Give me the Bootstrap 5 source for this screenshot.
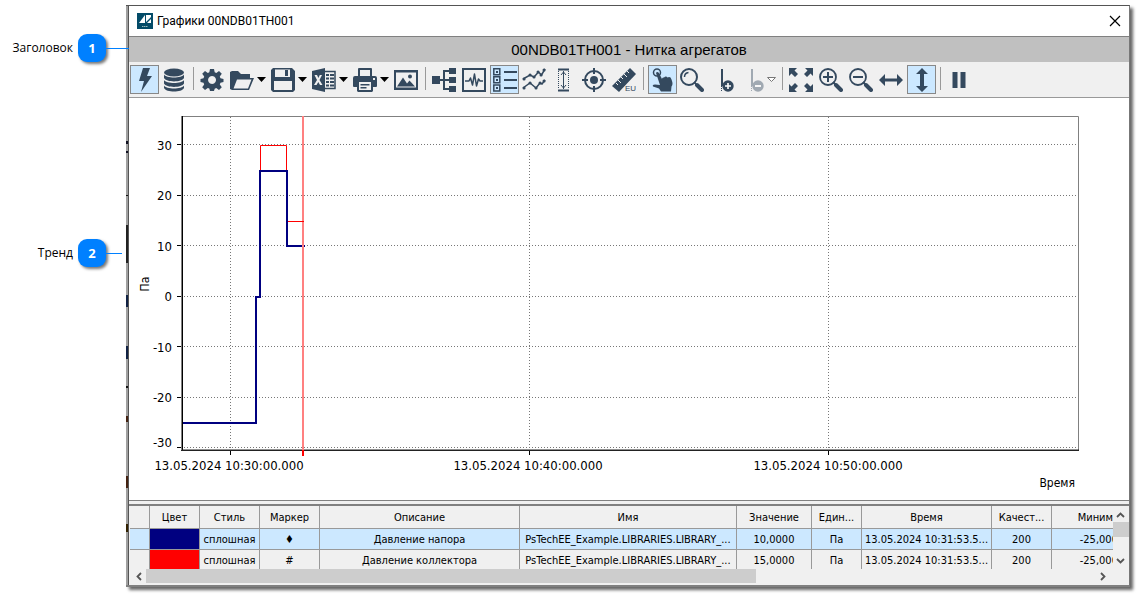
<!DOCTYPE html>
<html lang="ru">
<head>
<meta charset="utf-8">
<meta name="viewport" content="width=device-width, initial-scale=1">
<title>Графики 00NDB01TH001</title>
<link href="https://cdn.jsdelivr.net/npm/bootstrap@5.3.0/dist/css/bootstrap.min.css" rel="stylesheet">
<script src="https://cdn.jsdelivr.net/npm/bootstrap@5.3.0/dist/js/bootstrap.bundle.min.js"></script>
<style>
:root{--ink:#34495e;--panel:#f0f0f0;--pick:#cce8ff;--ui:"DejaVu Sans Condensed","Noto Sans",sans-serif}
body{background:#fff;color:#000;font-family:var(--ui);font-size:11px;line-height:16px}
.page{padding:5px 9px 8px 0}
.callouts{width:126px;flex:none;z-index:1;padding-top:29px}
.callout{height:28px;margin-bottom:177px;font:13px/28px "Open Sans",sans-serif}
.callout .label{font-size:12px;margin-right:5px}
.pin{width:28px;height:28px;border-radius:9px;background:#0080ff;color:#fff;font-weight:700;text-align:center;box-shadow:2px 2px 3px #0008}
.lead-line{height:1px;width:16px;background:#0080ff}
.lead-line.long{width:23px;margin-right:-3px}
.win{min-width:0;border-top:1px solid #555;border-right:1px solid #777;border-bottom:2px solid #808080;box-shadow:3px 3px 3px #0009}
.edge{width:3px;flex:none;border-right:1px solid #555;background:
 linear-gradient(#0000 135px,#112 135px 138px,#0000 138px 145px,#112 145px 147px,#0000 147px 189px,#111 189px 190px,#0000 190px 219px,#222 219px 257px,#0000 257px 289px,#124 289px 301px,#0000 301px 340px,#124 340px 353px,#0000 353px 380px,#111 380px 382px,#0000 382px 410px,#421 410px 416px,#0000 416px 470px,#421 470px 482px,#0000 482px 518px,#320 518px 526px,#0000 526px),#a0a0a0}
.pane{min-width:0}
.titlebar{height:30px;padding:0 8px;font:12px/30px Roboto,sans-serif}
.closer{border:0;background:none;padding:0;line-height:0}
.heading{height:26px;border-top:1px solid #808080;background:silver;font:15px/26px "Liberation Sans",sans-serif;margin:0}
.tools{height:36px;padding-top:3px;background:var(--panel);border-bottom:1px solid #999}
.tool{width:30px;height:29px;padding:0;border:0;background:none;color:var(--ink);flex:none}
.tool svg{width:24px;height:24px;fill:currentColor;display:block}
.tool .ln{fill:none;stroke:currentColor}
.tool.picked{width:29px;margin-left:1px;background:var(--pick);outline:1px solid #888;outline-offset:-1px}
.tool.drop{width:41px;padding-left:3px}
.tool.drop .arrow{width:11px;height:6px;margin-left:2px;color:#000}
.divider{width:8px;padding:2px 4px 4px 4px;flex:none}
.divider::before{content:"";display:block;width:1px;height:23px;background:#999}
.chart{display:block;width:100%;height:auto;font:12px var(--ui)}
.chart .ticks{font-size:13px}
.split{height:6px;border-top:1px solid #808080;border-bottom:2px solid #808080;background:var(--panel)}
.gridbox{background:var(--panel);height:63px;overflow:hidden}
.gridview{min-width:0;padding-left:1px;overflow:hidden}
.signals{table-layout:fixed;width:1023px;border-collapse:separate;border-spacing:0}
.signals th,.signals td{height:21px;padding:2px 0 0;line-height:18px;font-weight:400;text-align:center;border-right:1px solid #999;border-bottom:1px solid #999;white-space:nowrap;overflow:hidden}
.signals th{height:23px}
.signals .chosen td{background:var(--pick)}
.signals .navy{background:navy!important}
.signals .red{background:red}
.vbar{width:16px;flex:none;background:var(--panel)}
.vbar .thumb{height:15px;background:#cdcdcd}
.hbar{height:16px;background:var(--panel)}
.hbar .thumb{height:14px;width:61%;background:#cdcdcd}
</style>
</head>
<body>
<main class="page d-flex">
 <aside class="callouts">
  <div class="callout d-flex align-items-center justify-content-end"><span class="label">Заголовок</span><span class="pin">1</span><span class="lead-line long"></span></div>
  <div class="callout d-flex align-items-center justify-content-end"><span class="label">Тренд</span><span class="pin">2</span><span class="lead-line me-1"></span></div>
 </aside>
 <section class="win d-flex flex-grow-1">
  <div class="edge"></div>
  <div class="pane flex-grow-1">
   <div class="titlebar d-flex align-items-center">
    <svg width="16" height="16" class="me-1" aria-hidden="true"><path fill="#034b68" d="M0 0h16v16H0z"/><path fill="#fff" d="M2 10 8 2v8zM9 2h5v2L9 9zM10 10l4-4v4z"/><path stroke="#9bb" d="M5 13.500h6" stroke-dasharray="1.500 .5"/></svg>
    <span class="flex-grow-1">Графики 00NDB01TH001</span>
    <button class="closer" aria-label="Закрыть"><svg width="12" height="12"><path d="m1 1 10 10M11 1 1 11" stroke="#000" stroke-width="1.200"/></svg></button>
   </div>
   <h1 class="heading text-center">00NDB01TH001 - Нитка агрегатов</h1>
   <div class="tools d-flex" role="toolbar" aria-label="Инструменты">
    <button class="tool picked d-flex align-items-center justify-content-center" aria-label="Онлайн"><svg><path d="M10 0h7l-3 8h5L8 24l3-11H6z"/></svg></button>
    <button class="tool d-flex align-items-center justify-content-center" aria-label="Архив"><svg><ellipse cx="12" cy="4.500" rx="10" ry="4"/><path d="M2 6.500c2 4 18 4 20 0v3.500c-2 4.500-18 4.500-20 0zM2 12c2 4 18 4 20 0v3.500c-2 4.500-18 4.500-20 0zM2 17.500c2 4 18 4 20 0V20c-2 4.700-18 4.700-20 0z"/></svg></button>
    <span class="divider"></span>
    <button class="tool d-flex align-items-center justify-content-center" aria-label="Настройки"><svg><path fill-rule="evenodd" d="m10 1h4l.7 3.300 1.600.7L19 3l2.800 2.800-2 2.800.7 1.600 3 .8v3l-3 .8-.7 1.600 2 2.800L19 22l-2.800-2-1.500.7L14 23h-4l-.7-2.500-1.500-.6L5 22l-2.800-2.800 2-2.800-.7-1.600-3-.8v-3l3-.8.7-1.600-2-2.800L5 3l2.800 2 1.500-.7zM12 8a4 4 0 1 0 .1 0z"/></svg></button>
    <button class="tool drop d-flex align-items-center" aria-label="Открыть"><svg><path fill-rule="evenodd" d="M0 21V4l2-1h6l3 3h9v4h4l-5 12H2zM7 11.500 3.500 20.500H18l3.500-9z"/></svg><svg class="arrow"><path d="M1 0h9L5.500 5z"/></svg></button>
    <button class="tool drop d-flex align-items-center" aria-label="Сохранить"><svg><path fill-rule="evenodd" d="M2 0h19l3 3v19l-2 2H2l-2-2V2zM4 1.500V9h15V1.500zM3 13v9h18v-9z"/><path d="M14 2h3v6h-3z"/></svg><svg class="arrow"><path d="M1 0h9L5.500 5z"/></svg></button>
    <button class="tool drop d-flex align-items-center" aria-label="Экспорт в Excel"><svg><path fill-rule="evenodd" d="m0 3 13-3v24L0 21zM2.500 7 5 12l-3 5h2.500L6.300 14 8 17h2.500l-3-5L10 7H7.800L6.400 10 5 7z"/><path class="ln" stroke-width="1.500" d="M13 3.500h10v17H13"/><path class="ln" stroke-width="2" d="M14 7h3m1 0h4m-8 3.500h3m1 0h4M14 14h3m1 0h4m-8 3.500h3m1 0h4"/></svg><svg class="arrow"><path d="M1 0h9L5.500 5z"/></svg></button>
    <button class="tool drop d-flex align-items-center" aria-label="Печать"><svg><path fill-rule="evenodd" d="M5 8V1q0-1 1-1h12q1 0 1 1v7h3q2 0 2 2v8q0 1-1 1h-3v4l-1 1H5l-1-1v-4H1q-1 0-1-1v-8q0-2 2-2zM7 2v6h10V2zM6 14v8h12v-8zM20 10v2h2v-2z"/><path d="M7.500 16h9v1.500h-9zM7.500 19h6v1.500h-6z"/></svg><svg class="arrow"><path d="M1 0h9L5.500 5z"/></svg></button>
    <button class="tool d-flex align-items-center justify-content-center" aria-label="Изображение"><svg><path fill-rule="evenodd" d="M0 2h24v20H0zM2 4.500v15h20v-15z"/><path d="m3 18.500 6-9 4 6 2.500-3 5.500 6z"/><circle cx="16" cy="8.500" r="2"/></svg></button>
    <span class="divider"></span>
    <button class="tool d-flex align-items-center justify-content-center" aria-label="Дерево"><svg><path d="M0 8h8v8H0zM17 0h7v6h-7zM17 9h7v6h-7zM17 18h7v6h-7z"/><path class="ln" stroke-width="2" d="M7 12h11M18 3h-6v18h6"/></svg></button>
    <button class="tool d-flex align-items-center justify-content-center" aria-label="Сигнал"><svg><path class="ln" stroke-width="2" d="M1 1h22v22H1z"/><path class="ln" stroke-width="1.500" stroke-linejoin="round" d="M3 13h4l1.500-3 2 7 2-11 2 12 2-7 1.500 2h3"/></svg></button>
    <button class="tool picked d-flex align-items-center justify-content-center" aria-label="Легенда"><svg><path class="ln" stroke-width="1.500" d="M.8.8h6v6h-6zM.8 8.800h6v6h-6zM.8 17h6v6h-6z"/><path class="ln" stroke-width="2" d="M11 4h13M11 12h13M11 20h13M3 4h2m-2 8h2m-2 8h2"/></svg></button>
    <button class="tool d-flex align-items-center justify-content-center" aria-label="Тренды"><svg><path class="ln" stroke-width="1.500" d="m1 11 7-4 4 2 4.500-5 3 3L23 1M1 20l7-5 6 5 4-5 2 1 3-4"/><path class="ln" stroke-linecap="round" stroke-width="3" d="M2 11h.1M8 7h.1M12 9h.1M16 4h.1M19 7h.1M22 2h.1M2 20h.1M8 15h.1M14 20h.1M18 15h.1M22 13h.1"/></svg></button>
    <button class="tool d-flex align-items-center justify-content-center" aria-label="Масштаб по высоте"><svg><path class="ln" stroke-width="2" d="M6 1.500h11M6 22.500h11"/><path class="ln" d="M11.500 3v18M9 7l2.500-3L14 7m-5 10 2.500 3 2.500-3"/><path class="ln" stroke-dasharray="1 1" d="M6.500 3v18m10-18v18"/></svg></button>
    <button class="tool d-flex align-items-center justify-content-center" aria-label="Центрировать"><svg><circle class="ln" cx="12" cy="12" r="9" stroke-width="2"/><circle cx="12" cy="12" r="4"/><path class="ln" stroke-width="2" d="M12 0v6m0 12v6M0 12h6m12 0h6"/></svg></button>
    <button class="tool d-flex align-items-center justify-content-center" aria-label="Единицы измерения"><svg><path d="m0 18 18-18 6 6L7 24z"/><path stroke="#f0f0f0" d="m4 15 2 2m0-5 3 3m0-6 2 2m1-5 3 3m0-6 2 2"/><text x="13" y="23" font-size="8" font-family="Liberation Sans, sans-serif">EU</text></svg></button>
    <span class="divider"></span>
    <button class="tool picked d-flex align-items-center justify-content-center" aria-label="Указатель"><svg><circle class="ln" cx="6" cy="4.500" r="3.500" stroke-width="1.500"/><path d="M5 5q1-2 3 0l3 6q0-2 2-1.500 2-2 3.500 0 3-1.500 4 2 2 5 0 7l-.5 5H10l-2-3-6-2q-1-2 2-2l5 .5z"/></svg></button>
    <button class="tool d-flex align-items-center justify-content-center" aria-label="Лупа"><svg><circle class="ln" cx="9" cy="9" r="8" stroke-width="2"/><path class="ln" stroke-width="4" stroke-linecap="round" d="m17 17 5 5"/><path class="ln" stroke-width="1.500" d="m14 14 3 3M4.500 9q0-4 4-4.500"/></svg></button>
    <button class="tool d-flex align-items-center justify-content-center" aria-label="Добавить курсор"><svg><path class="ln" stroke-width="2" d="M12 1v17"/><path class="ln" stroke-dasharray="1 1" d="M11.500 18v5"/><circle cx="18" cy="18" r="5.700"/><path stroke="#fff" stroke-width="1.600" d="M15 18h6m-3-3v6"/></svg></button>
    <button class="tool drop d-flex align-items-center" aria-label="Удалить курсор"><svg opacity=".42"><path class="ln" stroke-width="2" d="M12 1v17"/><path class="ln" stroke-dasharray="1 1" d="M11.500 18v5"/><circle cx="18" cy="18" r="5.700"/><path stroke="#fff" stroke-width="2" d="M15 18h6"/></svg><svg class="arrow"><path d="M1.500.5h8l-4 4z" fill="#fff" stroke="#777"/></svg></button>
    <span class="divider"></span>
    <button class="tool d-flex align-items-center justify-content-center" aria-label="Показать всё"><svg><path d="M0 0h8L5.500 2.500 9 6 6 9 2.500 5.500 0 8zM24 0h-8l2.500 2.500L15 6l3 3 3.500-3.500L24 8zM0 24h8l-2.500-2.500L9 18l-3-3-3.500 3.500L0 16zM24 24h-8l2.500-2.500L15 18l3-3 3.500 3.500L24 16z"/></svg></button>
    <button class="tool d-flex align-items-center justify-content-center" aria-label="Увеличить"><svg><circle class="ln" cx="9" cy="9" r="8" stroke-width="1.800"/><path class="ln" stroke-width="2" d="M4 9h10M9 4v10m5 0 3 3"/><path class="ln" stroke-width="4" stroke-linecap="round" d="m17 17 5 5"/></svg></button>
    <button class="tool d-flex align-items-center justify-content-center" aria-label="Уменьшить"><svg><circle class="ln" cx="9" cy="9" r="8" stroke-width="1.800"/><path class="ln" stroke-width="2" d="M4 9h10m0 5 3 3"/><path class="ln" stroke-width="4" stroke-linecap="round" d="m17 17 5 5"/></svg></button>
    <button class="tool d-flex align-items-center justify-content-center" aria-label="По горизонтали"><svg><path d="m0 12 6-6v4.500h12V6l6 6-6 6v-4.500H6V18z"/></svg></button>
    <button class="tool picked d-flex align-items-center justify-content-center" aria-label="По вертикали"><svg><path d="m12 0 6 6h-4v12h4l-6 6-6-6h4V6H6z"/></svg></button>
    <span class="divider"></span>
    <button class="tool d-flex align-items-center justify-content-center" aria-label="Пауза"><svg><path d="M5.500 4h5v16h-5zM13.500 4h5v16h-5z"/></svg></button>
   </div>
   <svg class="chart" viewBox="129 98 1000 402" role="img" aria-label="Тренд">
    <path fill="none" stroke="#808080" d="M182 116.500h896.500V450"/>
    <path fill="none" stroke="#777" stroke-dasharray="1 2" d="M184 144.500h894M184 195.500h894M184 245.500h894M184 296.500h894M184 346.500h894M184 397.500h894M184 447.500h894M230.500 117v333M529.500 117v333M828.500 117v333"/>
    <path fill="none" stroke="#000" d="M182.500 116v335M177 144.500h5M177 195.500h5M177 245.500h5M177 296.500h5M177 346.500h5M177 397.500h5M177 447.500h5M230.500 450v5M529.500 450v5M828.500 450v5"/>
    <path stroke="#222" stroke-width="1.500" d="M181 450.300h898"/>
    <path stroke="#808080" d="M181.500 116v334"/>
    <path fill="none" stroke="red" d="M260.500 171v-25.500h26V171"/>
    <path fill="none" stroke="navy" stroke-width="2" d="M183 423h73V297h4V171h27v75h18"/>
    <path stroke="#ff8080" stroke-width="2" d="M303 116v334"/>
    <path stroke="red" stroke-width="2" d="M303 450v6"/>
    <path stroke="red" d="M288 221.500h16"/>
    <g class="ticks" text-anchor="end"><text x="172" y="150">30</text><text x="172" y="200">20</text><text x="172" y="251">10</text><text x="172" y="301">0</text><text x="172" y="352">-10</text><text x="172" y="402">-20</text><text x="172" y="447">-30</text></g>
    <g class="ticks" text-anchor="middle"><text x="229" y="470">13.05.2024 10:30:00.000</text><text x="528" y="470">13.05.2024 10:40:00.000</text><text x="828" y="470">13.05.2024 10:50:00.000</text></g>
    <text x="1075" y="487" text-anchor="end">Время</text>
    <text transform="translate(149 284)rotate(-90)" text-anchor="middle">Па</text>
   </svg>
   <div class="split"></div>
   <div class="gridbox d-flex">
    <div class="gridview flex-grow-1">
     <table class="signals">
      <colgroup><col style="width:20px"><col style="width:50px"><col style="width:60px"><col style="width:60px"><col style="width:200px"><col style="width:217px"><col style="width:75px"><col style="width:50px"><col style="width:130px"><col style="width:60px"><col style="width:101px"></colgroup>
      <thead><tr><th></th><th>Цвет</th><th>Стиль</th><th>Маркер</th><th>Описание</th><th>Имя</th><th>Значение</th><th>Един...</th><th>Время</th><th>Качест...</th><th>Минимум</th></tr></thead>
      <tbody>
       <tr class="chosen"><td></td><td class="navy"></td><td>сплошная</td><td>♦</td><td>Давление напора</td><td>PsTechEE_Example.LIBRARIES.LIBRARY_...</td><td>10,0000</td><td>Па</td><td>13.05.2024 10:31:53.5...</td><td>200</td><td>-25,0000</td></tr>
       <tr><td></td><td class="red"></td><td>сплошная</td><td>#</td><td>Давление коллектора</td><td>PsTechEE_Example.LIBRARIES.LIBRARY_...</td><td>15,0000</td><td>Па</td><td>13.05.2024 10:31:53.5...</td><td>200</td><td>-25,0000</td></tr>
      </tbody>
     </table>
    </div>
    <div class="vbar d-flex flex-column">
     <svg width="15" height="16"><path d="m4 11 3.500-3.500L11 11" fill="none" stroke="#555" stroke-width="1.800"/></svg>
     <div class="thumb"></div>
     <svg width="15" height="16" class="mt-auto"><path d="m4 6 3.500 3.500L11 6" fill="none" stroke="#555" stroke-width="1.800"/></svg>
    </div>
   </div>
   <div class="hbar d-flex">
    <svg width="17" height="15" class="flex-shrink-0"><path d="m12 4-3.500 3.500L12 11" fill="none" stroke="#555" stroke-width="1.800"/></svg>
    <div class="thumb"></div>
    <svg width="17" height="15" class="ms-auto me-3 flex-shrink-0"><path d="m5 4 3.500 3.500L5 11" fill="none" stroke="#555" stroke-width="1.800"/></svg>
   </div>
  </div>
 </section>
</main>
</body>
</html>
